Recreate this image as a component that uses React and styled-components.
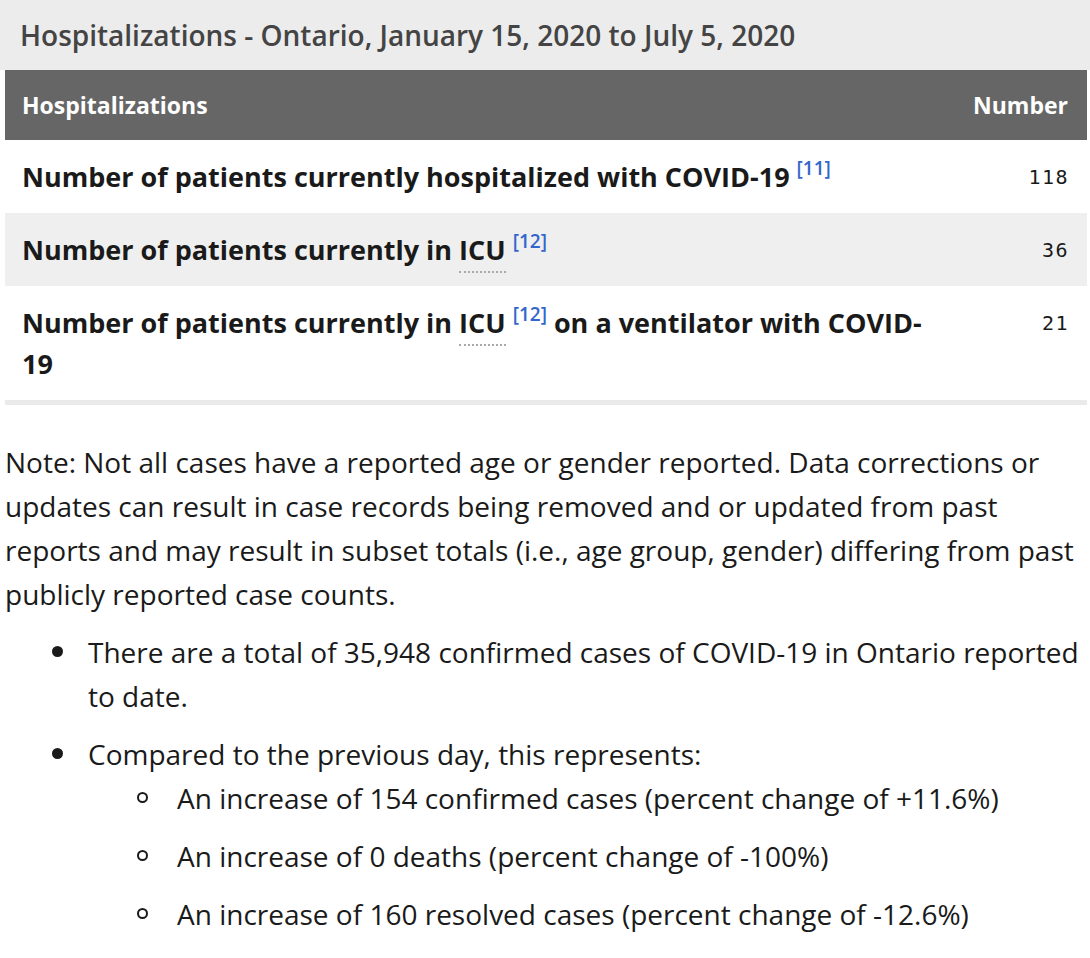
import React from "react";
import styled, { createGlobalStyle } from "styled-components";

const Global = createGlobalStyle`
  html, body { margin: 0; padding: 0; background: #fff; }
  body { font-family: "Open Sans", "Liberation Sans", sans-serif; color: #1a1a1a; }
`;

const Page = styled.div`
  width: 1090px;
  display: flex;
  flex-direction: column;
`;

const Caption = styled.div`
  background: #ececec;
  height: 70px;
  display: flex;
  align-items: center;
  padding-left: 20px;
  font-size: 28px;
  font-weight: 600;
  color: #444;
`;

const Table = styled.div`
  margin: 0 3px 0 5px;
  display: grid;
  grid-template-columns: minmax(0, 1fr) 140px;
  border-bottom: 5px solid #eaeaea;
`;

const HeadCell = styled.div`
  background: #666;
  color: #fff;
  height: 70px;
  display: flex;
  align-items: center;
  justify-content: ${(p) => (p.$right ? "flex-end" : "flex-start")};
  padding: ${(p) => (p.$right ? "0 19px 0 0" : "0 0 0 17px")};
  font-size: 23px;
  font-weight: 700;
`;

const LabelCell = styled.div`
  background: ${(p) => (p.$alt ? "#efefef" : "#fff")};
  padding: 16px 17px 16px 17px;
  font-size: 27px;
  font-weight: 700;
  line-height: 41px;
  color: #1a1a1a;
`;

const NumCell = styled.div`
  background: ${(p) => (p.$alt ? "#efefef" : "#fff")};
  padding: 17px 18px 15px 0;
  text-align: right;
  font-family: "DejaVu Sans Mono", "Liberation Mono", monospace;
  font-size: 20px;
  letter-spacing: 1.5px;
  line-height: 41px;
  color: #1a1a1a;
`;

const Ref = styled.sup`
  color: #3366cc;
  font-size: 19px;
  font-weight: 600;
  line-height: 1;
  vertical-align: 12px;
  margin-left: 7px;
`;

const Abbr = styled.span`
  border-bottom: 2px dotted #aaa;
  padding-bottom: 3px;
`;

const Note = styled.p`
  margin: 35px 0 0 5px;
  font-size: 28px;
  line-height: 44px;
  color: #1a1a1a;
`;

const List = styled.ul`
  margin: ${(p) => (p.$nested ? "0" : "14px 0 0")};
  padding-left: ${(p) => (p.$nested ? "89px" : "88px")};
  list-style: none;
  font-size: 28px;
  line-height: 44px;
`;

const Item = styled.li`
  position: relative;
  & + & { margin-top: 14px; }
  &::before {
    content: "";
    position: absolute;
    box-sizing: border-box;
    left: ${(p) => (p.$sub ? "-40px" : "-36px")};
    top: 16px;
    width: 11px;
    height: 11px;
    border-radius: 50%;
    background: ${(p) => (p.$sub ? "transparent" : "#1a1a1a")};
    border: ${(p) => (p.$sub ? "2px solid #1a1a1a" : "none")};
  }
`;

export default function App() {
  return (
    <Page>
      <Global />
      <Caption>Hospitalizations - Ontario, January 15, 2020 to July 5, 2020</Caption>
      <Table>
        <HeadCell>Hospitalizations</HeadCell>
        <HeadCell $right>Number</HeadCell>
        <LabelCell>
          Number of patients currently hospitalized with COVID-19<Ref>[11]</Ref>
        </LabelCell>
        <NumCell>118</NumCell>
        <LabelCell $alt>
          Number of patients currently in <Abbr>ICU</Abbr>
          <Ref>[12]</Ref>
        </LabelCell>
        <NumCell $alt>36</NumCell>
        <LabelCell>
          Number of patients currently in <Abbr>ICU</Abbr>
          <Ref>[12]</Ref> on a ventilator with COVID-19
        </LabelCell>
        <NumCell>21</NumCell>
      </Table>
      <Note>
        Note: Not all cases have a reported age or gender reported. Data corrections or
        updates can result in case records being removed and or updated from past
        reports and may result in subset totals (i.e., age group, gender) differing from past
        publicly reported case counts.
      </Note>
      <List>
        <Item>There are a total of 35,948 confirmed cases of COVID-19 in Ontario reported to date.</Item>
        <Item>
          Compared to the previous day, this represents:
          <List $nested>
            <Item $sub>An increase of 154 confirmed cases (percent change of +11.6%)</Item>
            <Item $sub>An increase of 0 deaths (percent change of -100%)</Item>
            <Item $sub>An increase of 160 resolved cases (percent change of -12.6%)</Item>
          </List>
        </Item>
      </List>
    </Page>
  );
}
